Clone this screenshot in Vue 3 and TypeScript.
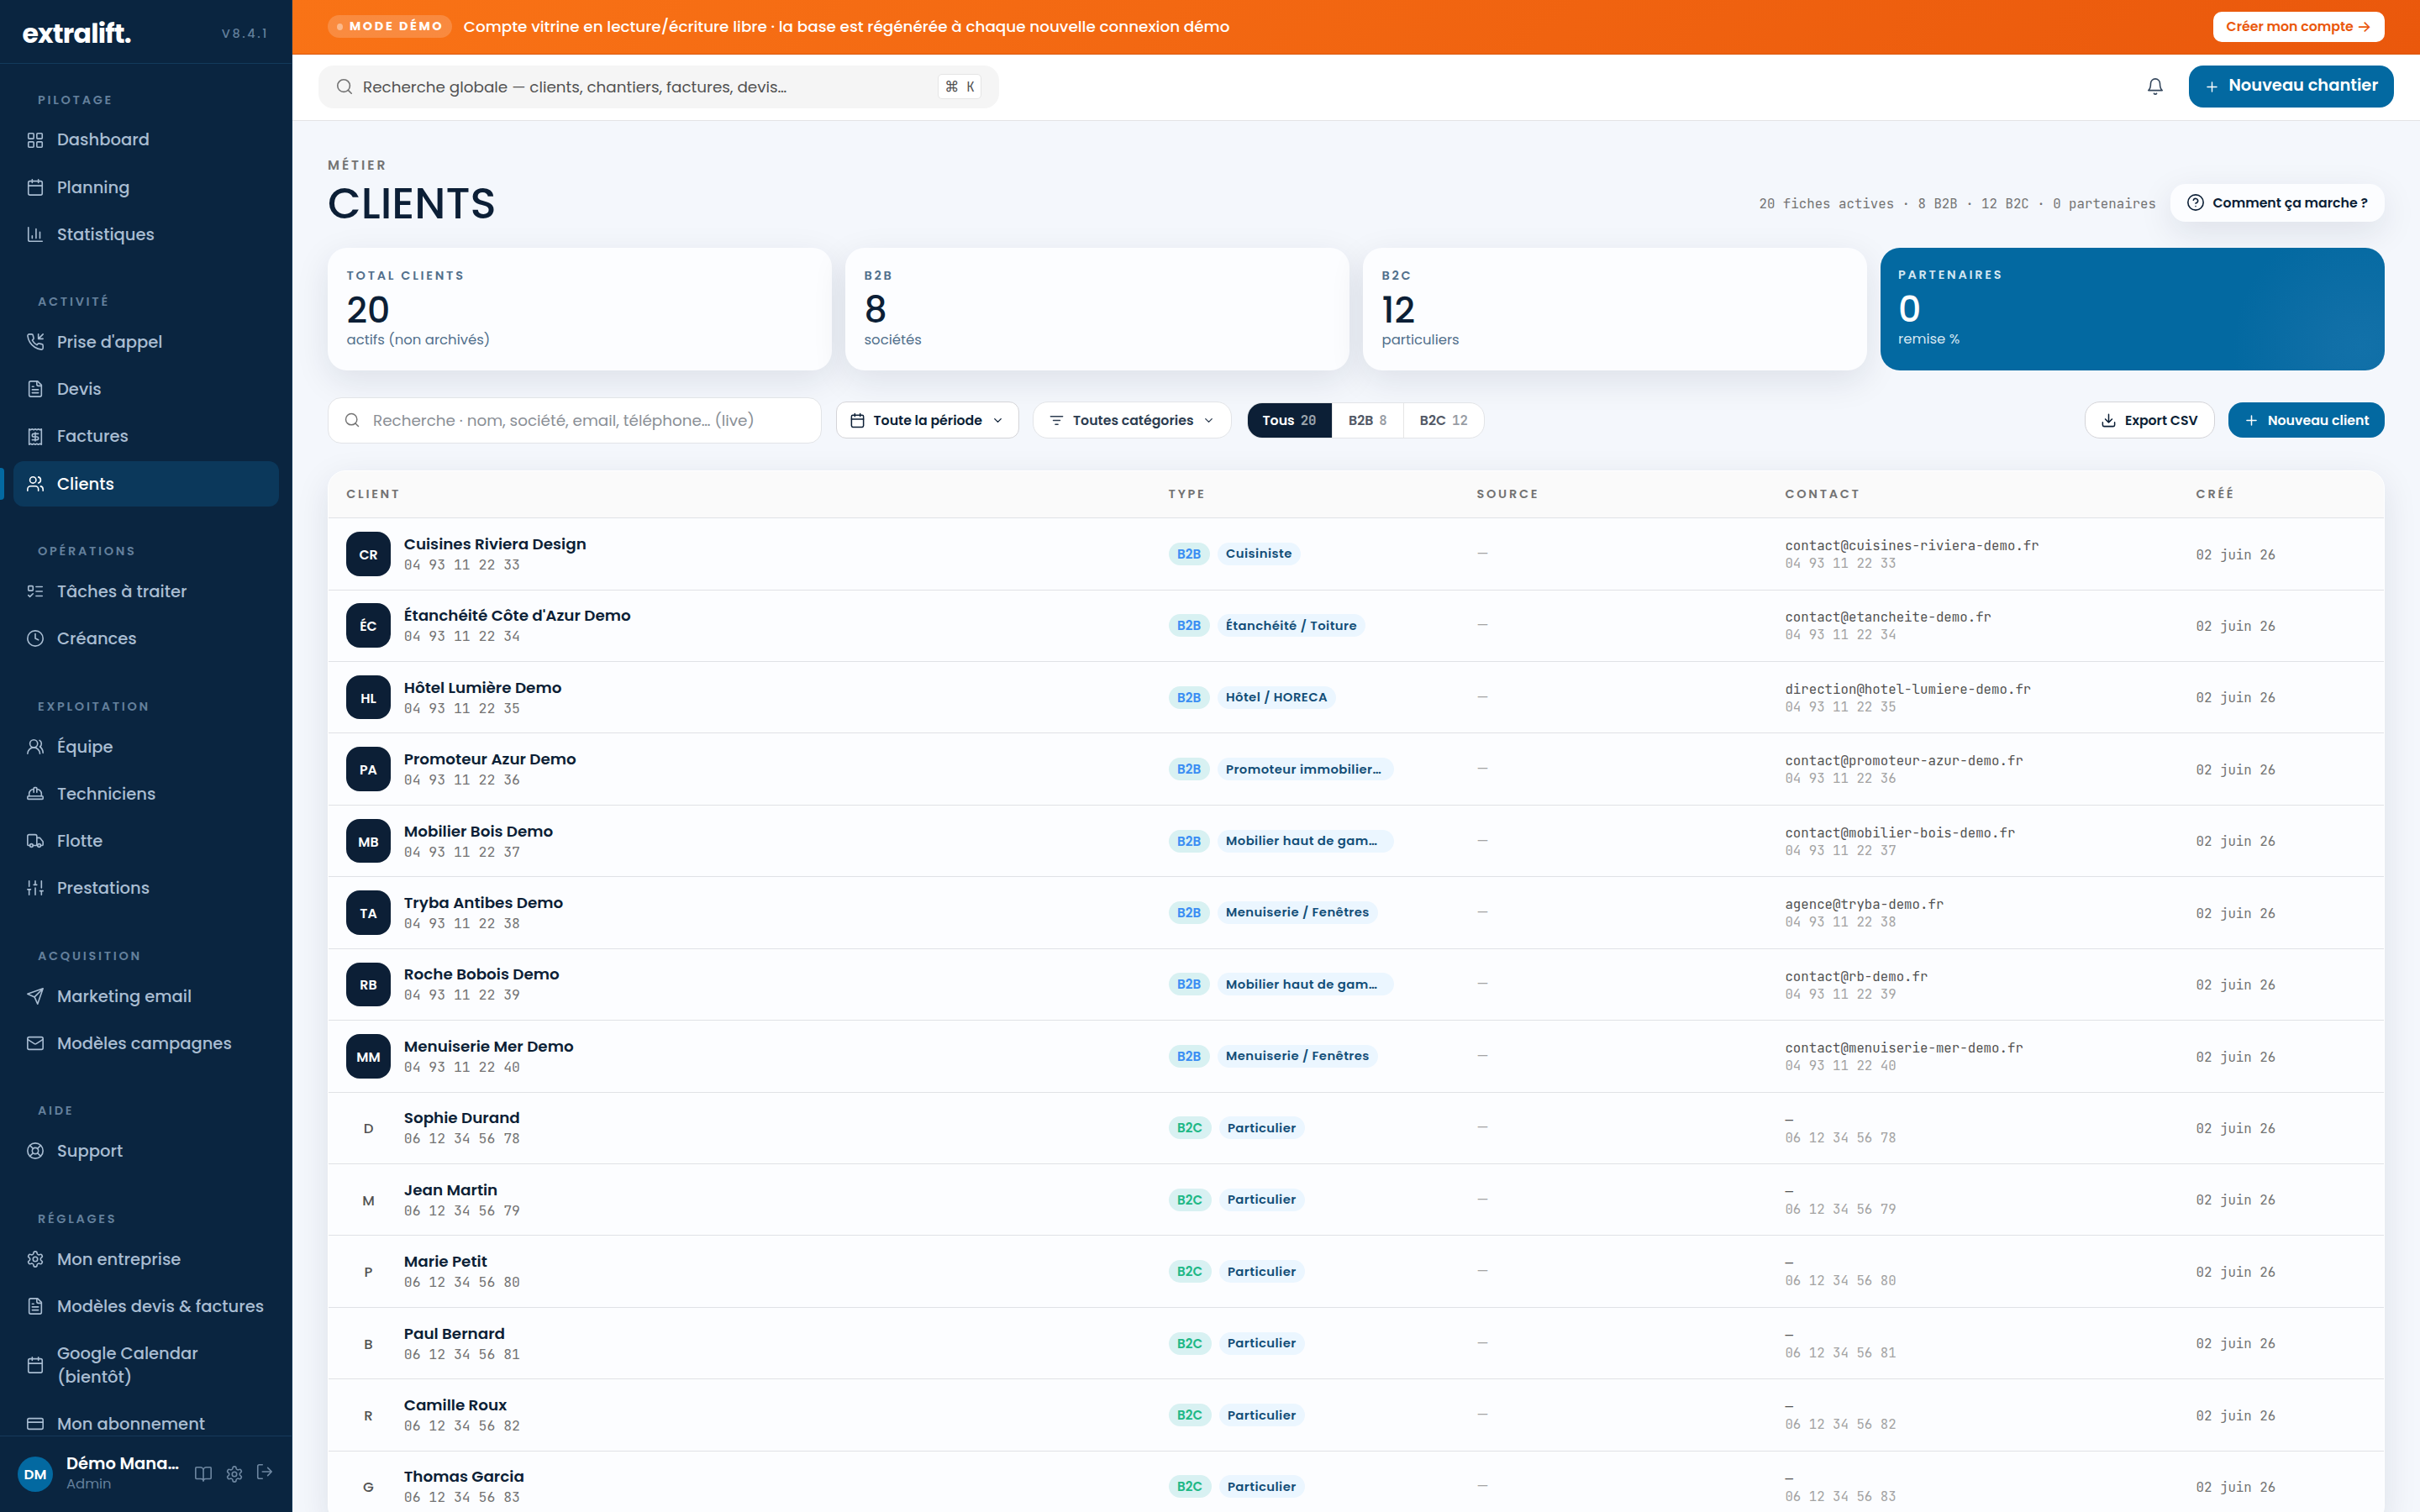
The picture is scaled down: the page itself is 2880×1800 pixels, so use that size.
<script setup lang="ts">
interface NavItem { label: string; icon: string; active?: boolean }
interface NavGroup { title: string; items: NavItem[] }
interface Client { initials: string; name: string; phone: string; kind: 'B2B' | 'B2C'; category: string; email: string }

const icons: Record<string, string> = {
  grid: '<rect x="3" y="3" width="7" height="7" rx="1"/><rect x="14" y="3" width="7" height="7" rx="1"/><rect x="14" y="14" width="7" height="7" rx="1"/><rect x="3" y="14" width="7" height="7" rx="1"/>',
  calendar: '<path d="M8 2v4M16 2v4M3 10h18"/><rect x="3" y="4" width="18" height="18" rx="2"/>',
  chart: '<path d="M3 3v16a2 2 0 0 0 2 2h16M18 17V9M13 17V5M8 17v-3"/>',
  phone: '<path d="M16 2v6h6M22 2l-6 6"/><path d="M22 16.92v3a2 2 0 0 1-2.18 2 19.79 19.79 0 0 1-8.63-3.07 19.5 19.5 0 0 1-6-6 19.79 19.79 0 0 1-3.07-8.67A2 2 0 0 1 4.11 2h3a2 2 0 0 1 2 1.72 12.84 12.84 0 0 0 .7 2.81 2 2 0 0 1-.45 2.11L8.09 9.91a16 16 0 0 0 6 6l1.27-1.27a2 2 0 0 1 2.11-.45 12.84 12.84 0 0 0 2.81.7A2 2 0 0 1 22 16.92z"/>',
  file: '<path d="M15 2H6a2 2 0 0 0-2 2v16a2 2 0 0 0 2 2h12a2 2 0 0 0 2-2V7Z"/><path d="M14 2v4a2 2 0 0 0 2 2h4M10 9H8M16 13H8M16 17H8"/>',
  receipt: '<path d="M4 2v20l2-1 2 1 2-1 2 1 2-1 2 1 2-1 2 1V2l-2 1-2-1-2 1-2-1-2 1-2-1-2 1Z"/><path d="M16 8h-6a2 2 0 1 0 0 4h4a2 2 0 1 1 0 4H8M12 17.5v-11"/>',
  users: '<path d="M16 21v-2a4 4 0 0 0-4-4H6a4 4 0 0 0-4 4v2"/><circle cx="9" cy="7" r="4"/><path d="M22 21v-2a4 4 0 0 0-3-3.87M16 3.13a4 4 0 0 1 0 7.75"/>',
  todo: '<rect x="3" y="5" width="6" height="6" rx="1"/><path d="m3 17 2 2 4-4M13 6h8M13 12h8M13 18h8"/>',
  clock: '<circle cx="12" cy="12" r="10"/><path d="M12 6v6l4 2"/>',
  team: '<path d="M18 21a8 8 0 0 0-16 0"/><circle cx="10" cy="8" r="5"/><path d="M22 20c0-3.37-2-6.5-4-8a5 5 0 0 0-.45-8.3"/>',
  hat: '<path d="M10 10V5a1 1 0 0 1 1-1h2a1 1 0 0 1 1 1v5M14 6a6 6 0 0 1 6 6v3M4 15v-3a6 6 0 0 1 6-6"/><rect x="2" y="15" width="20" height="4" rx="1"/>',
  truck: '<path d="M14 18V6a2 2 0 0 0-2-2H4a2 2 0 0 0-2 2v11a1 1 0 0 0 1 1h2M15 18H9M19 18h2a1 1 0 0 0 1-1v-3.65a1 1 0 0 0-.22-.624l-3.48-4.35A1 1 0 0 0 17.52 8H14"/><circle cx="17" cy="18" r="2"/><circle cx="7" cy="18" r="2"/>',
  sliders: '<path d="M4 21v-7M4 10V3M12 21v-9M12 8V3M20 21v-5M20 12V3M2 14h4M10 8h4M18 16h4"/>',
  send: '<path d="m22 2-7 20-4-9-9-4ZM22 2 11 13"/>',
  mail: '<rect x="2" y="4" width="20" height="16" rx="2"/><path d="m22 7-8.97 5.7a1.94 1.94 0 0 1-2.06 0L2 7"/>',
  buoy: '<circle cx="12" cy="12" r="10"/><path d="m4.93 4.93 4.24 4.24M14.83 9.17l4.24-4.24M14.83 14.83l4.24 4.24M9.17 14.83l-4.24 4.24"/><circle cx="12" cy="12" r="4"/>',
  gear: '<path d="M12.22 2h-.44a2 2 0 0 0-2 2v.18a2 2 0 0 1-1 1.73l-.43.25a2 2 0 0 1-2 0l-.15-.08a2 2 0 0 0-2.73.73l-.22.38a2 2 0 0 0 .73 2.73l.15.1a2 2 0 0 1 1 1.72v.51a2 2 0 0 1-1 1.74l-.15.09a2 2 0 0 0-.73 2.73l.22.38a2 2 0 0 0 2.73.73l.15-.08a2 2 0 0 1 2 0l.43.25a2 2 0 0 1 1 1.73V20a2 2 0 0 0 2 2h.44a2 2 0 0 0 2-2v-.18a2 2 0 0 1 1-1.73l.43-.25a2 2 0 0 1 2 0l.15.08a2 2 0 0 0 2.73-.73l.22-.39a2 2 0 0 0-.73-2.73l-.15-.08a2 2 0 0 1-1-1.74v-.5a2 2 0 0 1 1-1.74l.15-.09a2 2 0 0 0 .73-2.73l-.22-.38a2 2 0 0 0-2.73-.73l-.15.08a2 2 0 0 1-2 0l-.43-.25a2 2 0 0 1-1-1.73V4a2 2 0 0 0-2-2z"/><circle cx="12" cy="12" r="3"/>',
  card: '<rect x="2" y="5" width="20" height="14" rx="2"/><path d="M2 10h20"/>',
  book: '<path d="M12 7v14M3 18a1 1 0 0 1-1-1V4a1 1 0 0 1 1-1h5a4 4 0 0 1 4 4 4 4 0 0 1 4-4h5a1 1 0 0 1 1 1v13a1 1 0 0 1-1 1h-6a3 3 0 0 0-3 3 3 3 0 0 0-3-3z"/>',
  logout: '<path d="M9 21H5a2 2 0 0 1-2-2V5a2 2 0 0 1 2-2h4M16 17l5-5-5-5M21 12H9"/>',
  search: '<circle cx="11" cy="11" r="8"/><path d="m21 21-4.3-4.3"/>',
  bell: '<path d="M6 8a6 6 0 0 1 12 0c0 7 3 9 3 9H3s3-2 3-9M10.3 21a1.94 1.94 0 0 0 3.4 0"/>',
  plus: '<path d="M5 12h14M12 5v14"/>',
  help: '<circle cx="12" cy="12" r="10"/><path d="M9.09 9a3 3 0 0 1 5.83 1c0 2-3 3-3 3M12 17h.01"/>',
  filter: '<path d="M3 6h18M7 12h10M10 18h4"/>',
  chevron: '<path d="m6 9 6 6 6-6"/>',
  download: '<path d="M21 15v4a2 2 0 0 1-2 2H5a2 2 0 0 1-2-2v-4M7 10l5 5 5-5M12 15V3"/>',
}

const nav: NavGroup[] = [
  { title: 'PILOTAGE', items: [
    { label: 'Dashboard', icon: 'grid' }, { label: 'Planning', icon: 'calendar' }, { label: 'Statistiques', icon: 'chart' } ] },
  { title: 'ACTIVITÉ', items: [
    { label: "Prise d'appel", icon: 'phone' }, { label: 'Devis', icon: 'file' }, { label: 'Factures', icon: 'receipt' }, { label: 'Clients', icon: 'users', active: true } ] },
  { title: 'OPÉRATIONS', items: [
    { label: 'Tâches à traiter', icon: 'todo' }, { label: 'Créances', icon: 'clock' } ] },
  { title: 'EXPLOITATION', items: [
    { label: 'Équipe', icon: 'team' }, { label: 'Techniciens', icon: 'hat' }, { label: 'Flotte', icon: 'truck' }, { label: 'Prestations', icon: 'sliders' } ] },
  { title: 'ACQUISITION', items: [
    { label: 'Marketing email', icon: 'send' }, { label: 'Modèles campagnes', icon: 'mail' } ] },
  { title: 'AIDE', items: [{ label: 'Support', icon: 'buoy' }] },
  { title: 'RÉGLAGES', items: [
    { label: 'Mon entreprise', icon: 'gear' }, { label: 'Modèles devis & factures', icon: 'file' }, { label: 'Google Calendar (bientôt)', icon: 'calendar' }, { label: 'Mon abonnement', icon: 'card' } ] },
]

const stats = [
  { label: 'TOTAL CLIENTS', value: '20', sub: 'actifs (non archivés)' },
  { label: 'B2B', value: '8', sub: 'sociétés' },
  { label: 'B2C', value: '12', sub: 'particuliers' },
  { label: 'PARTENAIRES', value: '0', sub: 'remise %', accent: true },
]

const tabs = [
  { label: 'Tous', count: 20, active: true },
  { label: 'B2B', count: 8 },
  { label: 'B2C', count: 12 },
]

const pros: [string, string, string, string][] = [
  ['CR', 'Cuisines Riviera Design', 'Cuisiniste', 'contact@cuisines-riviera-demo.fr'],
  ['ÉC', "Étanchéité Côte d'Azur Demo", 'Étanchéité / Toiture', 'contact@etancheite-demo.fr'],
  ['HL', 'Hôtel Lumière Demo', 'Hôtel / HORECA', 'direction@hotel-lumiere-demo.fr'],
  ['PA', 'Promoteur Azur Demo', 'Promoteur immobilier…', 'contact@promoteur-azur-demo.fr'],
  ['MB', 'Mobilier Bois Demo', 'Mobilier haut de gam…', 'contact@mobilier-bois-demo.fr'],
  ['TA', 'Tryba Antibes Demo', 'Menuiserie / Fenêtres', 'agence@tryba-demo.fr'],
  ['RB', 'Roche Bobois Demo', 'Mobilier haut de gam…', 'contact@rb-demo.fr'],
  ['MM', 'Menuiserie Mer Demo', 'Menuiserie / Fenêtres', 'contact@menuiserie-mer-demo.fr'],
]
const people: [string, string][] = [
  ['D', 'Sophie Durand'], ['M', 'Jean Martin'], ['P', 'Marie Petit'], ['B', 'Paul Bernard'], ['R', 'Camille Roux'], ['G', 'Thomas Garcia'],
]
const clients: Client[] = [
  ...pros.map(([initials, name, category, email], i): Client => ({ initials, name, category, email, kind: 'B2B', phone: `04 93 11 22 ${33 + i}` })),
  ...people.map(([initials, name], i): Client => ({ initials, name, category: 'Particulier', email: '—', kind: 'B2C', phone: `06 12 34 56 ${78 + i}` })),
]
</script>

<template>
  <div class="app">
    <aside class="sidebar">
      <div class="brand">
        <span class="logo">extralift.</span>
        <span class="version">V8.4.1</span>
      </div>
      <nav class="nav">
        <section v-for="g in nav" :key="g.title" class="group">
          <h2 class="group-title">{{ g.title }}</h2>
          <a v-for="it in g.items" :key="it.label" class="item" :class="{ active: it.active }">
            <svg class="ico" viewBox="0 0 24 24" v-html="icons[it.icon]"></svg>
            <span>{{ it.label }}</span>
          </a>
        </section>
      </nav>
      <div class="user">
        <span class="user-avatar">DM</span>
        <div class="user-text">
          <span class="user-name">Démo Mana…</span>
          <span class="user-role">Admin</span>
        </div>
        <div class="user-actions">
          <svg class="ico" viewBox="0 0 24 24" v-html="icons.book"></svg>
          <svg class="ico" viewBox="0 0 24 24" v-html="icons.gear"></svg>
          <svg class="ico raised" viewBox="0 0 24 24" v-html="icons.logout"></svg>
        </div>
      </div>
    </aside>

    <main class="main">
      <div class="banner">
        <span class="mode"><i class="dot"></i>MODE DÉMO</span>
        <span class="banner-text">Compte vitrine en lecture/écriture libre · la base est régénérée à chaque nouvelle connexion démo</span>
        <a class="banner-cta">Créer mon compte <i class="arrow">→</i></a>
      </div>

      <header class="topbar">
        <div class="global-search">
          <svg class="ico" viewBox="0 0 24 24" v-html="icons.search"></svg>
          <span class="ph">Recherche globale — clients, chantiers, factures, devis…</span>
          <kbd><i class="cmd">⌘</i>K</kbd>
        </div>
        <svg class="ico bell" viewBox="0 0 24 24" v-html="icons.bell"></svg>
        <button class="new-job">
          <svg class="ico" viewBox="0 0 24 24" v-html="icons.plus"></svg>
          <span>Nouveau chantier</span>
        </button>
      </header>

      <div class="content">
        <div class="head">
          <div>
            <div class="eyebrow">MÉTIER</div>
            <h1>CLIENTS</h1>
          </div>
          <div class="head-right">
            <span class="summary">20 fiches actives · 8 B2B · 12 B2C · 0 partenaires</span>
            <button class="how">
              <svg class="ico" viewBox="0 0 24 24" v-html="icons.help"></svg>
              <span>Comment ça marche ?</span>
            </button>
          </div>
        </div>

        <div class="stats">
          <div v-for="s in stats" :key="s.label" class="stat" :class="{ accent: s.accent }">
            <div class="stat-label">{{ s.label }}</div>
            <div class="stat-value">{{ s.value }}</div>
            <div class="stat-sub">{{ s.sub }}</div>
          </div>
        </div>

        <div class="filters">
          <div class="search">
            <svg class="ico" viewBox="0 0 24 24" v-html="icons.search"></svg>
            <span>Recherche · nom, société, email, téléphone… (live)</span>
          </div>
          <button class="btn period">
            <svg class="ico" viewBox="0 0 24 24" v-html="icons.calendar"></svg>
            <span>Toute la période</span>
            <svg class="ico chev" viewBox="0 0 24 24" v-html="icons.chevron"></svg>
          </button>
          <button class="btn cats">
            <svg class="ico" viewBox="0 0 24 24" v-html="icons.filter"></svg>
            <span>Toutes catégories</span>
            <svg class="ico chev" viewBox="0 0 24 24" v-html="icons.chevron"></svg>
          </button>
          <div class="tabs">
            <span v-for="t in tabs" :key="t.label" class="tab" :class="{ on: t.active }">{{ t.label }}<b>{{ t.count }}</b></span>
          </div>
          <div class="actions">
            <button class="btn export">
              <svg class="ico" viewBox="0 0 24 24" v-html="icons.download"></svg>
              <span>Export CSV</span>
            </button>
            <button class="btn primary">
              <svg class="ico" viewBox="0 0 24 24" v-html="icons.plus"></svg>
              <span>Nouveau client</span>
            </button>
          </div>
        </div>

        <div class="table">
          <div class="row thead">
            <span>CLIENT</span><span>TYPE</span><span>SOURCE</span><span>CONTACT</span><span>CRÉÉ</span>
          </div>
          <div v-for="c in clients" :key="c.name" class="row">
            <div class="who">
              <span class="avatar" :class="{ plain: c.kind === 'B2C' }">{{ c.initials }}</span>
              <div>
                <div class="name">{{ c.name }}</div>
                <div class="phone">{{ c.phone }}</div>
              </div>
            </div>
            <div class="types">
              <span class="kind" :class="c.kind.toLowerCase()">{{ c.kind }}</span>
              <span class="category" :class="{ clipped: c.category.endsWith('…') }">{{ c.category }}</span>
            </div>
            <div class="source">—</div>
            <div class="contact">
              <div>{{ c.email }}</div>
              <div class="tel">{{ c.phone }}</div>
            </div>
            <div class="date">02 juin 26</div>
          </div>
        </div>
      </div>
    </main>
  </div>
</template>

<style>
body { margin: 0; overflow: hidden; }
</style>

<style scoped>
.app, .app * { box-sizing: border-box; }
.app {
  display: flex;
  width: 2880px;
  height: 1800px;
  overflow: hidden;
  font-family: Poppins, Inter, "Open Sans", sans-serif;
  color: #0c1f36;
  background: #f4f7fc;
}
h1, h2 { margin: 0; font-weight: 500; }
button { font: inherit; color: inherit; border: 0; padding: 0; margin: 0; }
span { white-space: nowrap; }
i { font-style: normal; }
.ico { flex: none; display: block; width: 22px; height: 22px; fill: none; stroke: currentColor; stroke-width: 1.75; stroke-linecap: round; stroke-linejoin: round; }

.sidebar { flex: none; display: flex; flex-direction: column; width: 348px; height: 1800px; background: #0a2540; border-right: 1px solid #0e3557; }
.brand { flex: none; display: flex; align-items: center; justify-content: space-between; height: 76px; padding: 4px 27px 0 26.5px; border-bottom: 1px solid #123a5c; }
.logo { font-size: 31.5px; font-weight: 700; letter-spacing: -0.025em; line-height: 40px; color: #fff; }
.version { font-size: 14.44px; font-weight: 500; letter-spacing: 0.18em; color: #64809c; padding-top: 2px; }
.nav { flex: 1; min-height: 0; overflow: hidden; padding: 0 15px 0 16px; }
.group { padding-top: 42.9px; display: flex; flex-direction: column; gap: 1.9px; }
.group:first-child { padding-top: 32.5px; }
.group-title { font-size: 14.44px; font-weight: 600; letter-spacing: 0.188em; line-height: 20px; color: #64809c; padding-left: 29px; margin-bottom: 9.6px; }
.item { position: relative; display: flex; align-items: center; gap: 15px; min-height: 54.2px; padding: 12.5px 8px 13.5px 15px; border-radius: 12px; color: #a9bdd2; font-size: 19.55px; font-weight: 500; line-height: 28.2px; }
.item span { white-space: normal; max-width: 250px; }
.item.active { background: #0b385b; color: #fff; }
.item.active::before { content: ""; position: absolute; left: -16px; top: 8px; width: 5px; height: 38px; background: #0369a1; border-radius: 0 4px 4px 0; }
.user { flex: none; display: flex; align-items: center; height: 91px; padding: 0 21px 0 21px; border-top: 1px solid #17395a; }
.user-avatar { flex: none; display: flex; align-items: center; justify-content: center; width: 42px; height: 42px; border-radius: 50%; background: #0369a1; color: #fff; font-size: 16.6px; font-weight: 600; }
.user-text { display: flex; flex-direction: column; margin-left: 16px; width: 134px; padding-bottom: 1.5px; }
.user-name { font-size: 19.5px; font-weight: 600; line-height: 24.5px; color: #fff; }
.user-role { font-size: 16.4px; line-height: 22px; color: #64809c; }
.user-actions { display: flex; justify-content: space-between; margin-left: auto; width: 95px; color: #6f88a2; }
.raised { position: relative; top: -3px; }

.main { flex: 1; min-width: 0; display: flex; flex-direction: column; background: #f4f7fc; }
.banner { flex: none; display: flex; align-items: center; height: 64.6px; padding: 0 42px; background: linear-gradient(135deg, #f97316, #ea580c); border-bottom: 1.3px solid #d9570d; color: #fff; }
.mode { display: flex; align-items: center; height: 27px; padding: 0 10px 0 11px; border-radius: 14px; background: rgba(255, 255, 255, 0.18); font-size: 14.44px; font-weight: 700; letter-spacing: 0.18em; }
.dot { width: 7px; height: 8px; margin-right: 8px; border-radius: 50%; background: rgba(255, 255, 255, 0.4); }
.banner-text { margin-left: 13.5px; font-size: 18.375px; font-weight: 500; }
.banner-cta { margin-left: auto; display: flex; align-items: center; justify-content: center; gap: 4px; width: 204px; height: 36.5px; padding-bottom: 1px; border-radius: 10px; background: #fff; color: #ea580c; font-size: 15.75px; font-weight: 600; white-space: nowrap; }
.arrow { font-family: Inter, sans-serif; font-size: 18.5px; font-weight: 500; line-height: 18px; }

.topbar { flex: none; display: flex; align-items: center; height: 79px; padding: 0 31px 1px; background: #fff; border-bottom: 1.3px solid #e3e3e5; }
.global-search { display: flex; align-items: center; width: 810px; height: 51px; padding: 0 21px 0 20px; border-radius: 18px; background: #f5f5f5; color: #525252; font-size: 18.375px; }
.global-search .ico { color: #737373; }
.ph { margin-left: 11px; }
kbd { margin-left: auto; display: flex; align-items: center; justify-content: center; gap: 9px; width: 52px; height: 29.5px; border: 1.3px solid #e5e5e5; border-radius: 5px; background: #fff; font-family: "JetBrains Mono", "DejaVu Sans Mono", monospace; font-size: 15.75px; white-space: pre; color: #525252; }
.cmd { font-family: Inter, sans-serif; font-size: 17px; line-height: 20px; }
.bell { margin-left: auto; color: #33465c; }
.new-job { display: flex; align-items: center; width: 244px; height: 50px; margin-left: 29px; padding-left: 18px; border-radius: 17px; background: #0369a1; color: #fff; font-size: 19.5px; font-weight: 600; }
.new-job .ico { width: 19px; height: 19px; }
.new-job span { margin-left: 10.5px; margin-bottom: 4px; }

.content { padding: 41.5px 42px 0; }
.head { display: flex; justify-content: space-between; align-items: flex-end; }
.eyebrow { font-size: 15.5px; font-weight: 600; letter-spacing: 0.19em; line-height: 24px; color: #737373; }
h1 { margin-top: 6px; font-size: 51.5px; line-height: 54px; color: #0c1f36; }
.head-right { display: flex; align-items: center; height: 54px; gap: 17px; }
.summary { font-family: "JetBrains Mono", "DejaVu Sans Mono", monospace; font-size: 15.75px; color: #737373; }
.how { display: flex; align-items: center; width: 255px; height: 45px; margin-bottom: 2px; padding-left: 19px; border-radius: 18px; background: #fcfdff; font-size: 15.75px; font-weight: 600; box-shadow: 0 12px 40px rgba(15, 31, 54, 0.1); }
.how span { margin-left: 9.5px; }

.stats { display: grid; grid-template-columns: repeat(4, 1fr); gap: 16px; margin-top: 25.7px; }
.stat { height: 146px; padding: 22.4px 22.5px; border-radius: 23px; background: #fcfdff; box-shadow: 0 12px 40px rgba(15, 31, 54, 0.1); }
.stat-label { font-size: 14.44px; font-weight: 600; letter-spacing: 0.19em; line-height: 22px; color: #52708c; }
.stat-value { margin-top: 8.8px; font-size: 42.6px; font-weight: 500; line-height: 42px; }
.stat-sub { margin-top: 3.5px; font-size: 16.5px; line-height: 24px; color: #52708c; }
.stat.accent { padding: 21.4px 21px; background: radial-gradient(circle 150px at 570px 118px, #1271a9 0%, #106fa7 25%, #0369a1 100%); color: #fff; box-shadow: none; }
.accent .stat-label { color: #d3e6f1; }
.accent .stat-sub { color: #d3e6f1; }

.filters { display: flex; align-items: center; margin-top: 32.4px; height: 54.5px; font-size: 15.75px; }
.search { display: flex; align-items: center; width: 587.5px; height: 54.5px; padding-left: 18px; border: 1.4px solid #e2e4e7; border-radius: 16px; background: #fff; color: #8a8f96; font-size: 18.375px; }
.search .ico { width: 20px; height: 20px; color: #737373; }
.search span { margin-left: 15px; }
.btn { display: flex; align-items: center; height: 44px; background: #fff; border: 1.4px solid #d4d4d8; border-radius: 16px; font-weight: 600; }
.btn .ico { width: 19px; height: 19px; stroke-width: 1.9; }
.btn .chev { width: 15px; height: 15px; stroke-width: 2.2; }
.period { width: 218.5px; margin-left: 17px; padding-left: 15px; border-radius: 12px; }
.period span { margin: 0 10.5px 0 10px; }
.cats { width: 237px; margin-left: 16px; padding-left: 17.5px; border-color: #e2e4e7; border-radius: 18px; color: #2c3c50; }
.cats span { margin: 0 10.5px 0 10.5px; }
.tabs { display: flex; margin-left: 18px; height: 43.4px; border: 1.4px solid #e2e4e7; border-radius: 18px; background: #fff; overflow: hidden; color: #525966; font-weight: 600; }
.tab { display: flex; align-items: center; gap: 7px; padding: 0 19px; }
.tab + .tab { border-left: 1.3px solid #e5e5e5; }
.tab b { font-family: "JetBrains Mono", "DejaVu Sans Mono", monospace; font-weight: 700; font-size: 15.75px; opacity: 0.6; }
.tab.on { padding: 0 18.5px 0 17.5px; background: #0c1f36; color: #fff; }
.actions { margin-left: auto; display: flex; gap: 16.5px; }
.export { width: 154.5px; padding-left: 18px; border-radius: 18px; }
.export span { margin-left: 10px; }
.primary { width: 186px; height: 42px; margin-top: 1px; padding-left: 18px; border: 0; border-radius: 17px; background: #0369a1; color: #fff; }
.primary span { margin-left: 10px; }

.table { margin-top: 32.4px; border: 1.3px solid #fff; border-radius: 21px; background: #fcfdff; overflow: hidden; box-shadow: 0 12px 40px rgba(15, 31, 54, 0.1); }
.row { display: grid; grid-template-columns: 40fr 15fr 15fr 20fr 10fr; align-items: center; height: 85.45px; padding: 0; border-bottom: 1.5px solid #e0e2e6; }
.row > * { padding-left: 21.2px; }
.thead { height: 56px; background: #fafafa; font-size: 14.44px; font-weight: 600; letter-spacing: 0.19em; color: #737373; }
.who { display: flex; align-items: center; gap: 16px; }
.avatar { flex: none; display: flex; align-items: center; justify-content: center; width: 52.6px; height: 52.6px; border-radius: 16px; background: #0c1f36; color: #fff; font-size: 15.75px; font-weight: 600; padding-top: 2px; }
.avatar.plain { background: none; color: #525252; font-weight: 500; font-size: 16.5px; }
.name { font-size: 18.375px; font-weight: 600; line-height: 26px; }
.phone { font-family: "JetBrains Mono", "DejaVu Sans Mono", monospace; font-size: 16.45px; line-height: 23px; color: #737373; }
.types { display: flex; gap: 9px; }
.kind, .category { display: flex; align-items: center; height: 27px; padding: 0 10.3px; border-radius: 14px; font-size: 14.8px; letter-spacing: 0.03em; font-weight: 600; }
.kind { background: #d8f1f2; font-size: 15.1px; letter-spacing: 0.01em; }
.b2b { color: #3b8ef3; }
.b2c { color: #1fb886; }
.category { background: #ebf6ff; color: #134e78; }
.category.clipped { width: 210px; }
.source { color: #a3a3a3; font-size: 15.75px; }
.contact, .date { font-family: "JetBrains Mono", "DejaVu Sans Mono", monospace; font-size: 15.75px; line-height: 21px; color: #525252; }
.contact { padding-top: 1.5px; }
.tel { color: #a3a3a3; }
.date { color: #737373; padding-top: 1.5px; }
</style>
